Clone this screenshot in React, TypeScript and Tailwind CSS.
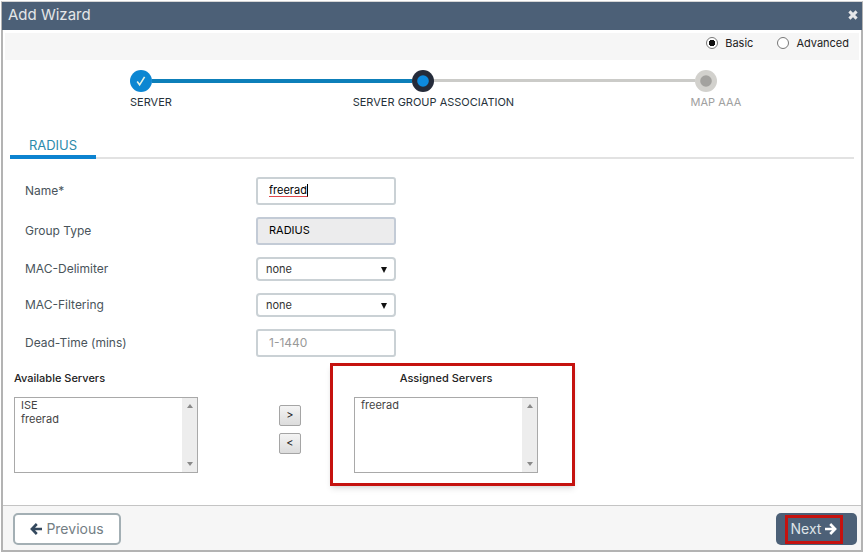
import { useState } from "react";
import type { ReactNode } from "react";

type StepState = "done" | "current" | "pending";

function StepDot({ state }: { state: StepState }) {
  if (state === "done") {
    return (
      <svg viewBox="0 0 22 22" className="size-[22px] shrink-0" aria-hidden="true">
        <circle cx="11" cy="11" r="11" fill="#0c86d2" />
        <path d="M7.2 11.6l2.4 3.2 5-8" fill="none" stroke="#e6f3e6" strokeWidth="1.6" />
      </svg>
    );
  }
  const current = state === "current";
  return (
    <svg viewBox="0 0 22 22" className="size-[22px] shrink-0" aria-hidden="true">
      <circle cx="11" cy="11" r="11" fill={current ? "#242b3a" : "#d2d1cd"} />
      <circle cx="11" cy="11" r="5.8" fill={current ? "#0d8ade" : "#a3a29f"} />
    </svg>
  );
}

function Step({ state, label }: { state: StepState; label: string }) {
  return (
    <li className="flex w-[22px] flex-col items-center gap-1">
      <StepDot state={state} />
      <span className={`ml-5 text-[11px] leading-3 whitespace-nowrap ${state === "pending" ? "text-[#a0a0a0]" : "text-[#26323a]"}`}>
        {label}
      </span>
    </li>
  );
}

function Arrow({ left = false }: { left?: boolean }) {
  return (
    <svg
      viewBox="0 0 12 12"
      className={`size-3 shrink-0 ${left ? "text-[#34495e]" : "text-white"}`}
      fill="none"
      stroke="currentColor"
      strokeWidth="2.6"
      aria-hidden="true"
    >
      <path d={left ? "M12 6H2M6.8 1L1.9 6l4.9 5" : "M0 6h10M5.2 1l4.9 5-4.9 5"} />
    </svg>
  );
}

function Row({ id, label, children }: { id: string; label: string; children: ReactNode }) {
  return (
    <div className="flex items-center">
      <label htmlFor={id} className="w-[231px] text-xs text-[#49545b]">
        {label}
      </label>
      <div className="relative w-[140px]">{children}</div>
    </div>
  );
}

function Dropdown({ id }: { id: string }) {
  return (
    <>
      <select id={id} className="block h-6 w-full appearance-none rounded border-2 border-[#cad1d5] bg-white px-2 text-[11px] text-[#333]">
        <option>none</option>
      </select>
      <svg viewBox="0 0 6 6" className="pointer-events-none absolute top-[10px] right-[9px] size-[6px]" aria-hidden="true">
        <path d="M0 0h6L3 6z" fill="#111" />
      </svg>
    </>
  );
}

function ServerList({ id, servers }: { id: string; servers: string[] }) {
  return (
    <div className="flex h-[76px] w-[184px] border border-[#a9a9a9] bg-white">
      <select id={id} multiple className="min-w-0 flex-1 appearance-none overflow-hidden bg-white text-[11px] text-[#444]">
        {servers.map((s) => (
          <option key={s} className="min-h-0 px-[6px] py-0 leading-[14px]">
            {s}
          </option>
        ))}
      </select>
      <div className="flex w-[15px] flex-col items-center justify-between bg-[#ededed] py-[6px]">
        <svg viewBox="0 0 6 4" className="h-1 w-[6px]" aria-hidden="true">
          <path d="M0 4h6L3 0z" fill="#8a8a8a" />
        </svg>
        <svg viewBox="0 0 6 4" className="h-1 w-[6px]" aria-hidden="true">
          <path d="M0 0h6L3 4z" fill="#8a8a8a" />
        </svg>
      </div>
    </div>
  );
}

const inputClass = "block h-7 w-full rounded-[3px] border-2 px-[11px] pb-[2px]";
const moveClass =
  "flex h-[21px] w-[22px] items-center justify-center rounded-[2px] border border-[#a5a5a5] bg-linear-to-b from-[#f4f4f4] to-[#dcdcdc] text-[11px] text-[#222]";

export default function App() {
  const [mode, setMode] = useState("basic");
  const [name, setName] = useState("freerad");

  return (
    <div className="flex min-h-screen flex-col bg-white p-px font-['Inter','Liberation_Sans',sans-serif]">
      <main className="flex flex-1 flex-col border-2 border-[#b3b3b3] border-t-[#d5d5d5] bg-white">
        <header className="-mx-px -mt-px flex h-7 items-center justify-between bg-[#4c6077] pr-1 pb-[2px] pl-[6px]">
          <h1 className="text-[15px] leading-5 text-[#e3e6e8]">Add Wizard</h1>
          <button type="button" aria-label="Close">
            <svg viewBox="0 0 10 10" className="size-[10px]" aria-hidden="true">
              <path d="M1.4 1.4l7.2 7.2M8.6 1.4L1.4 8.6" stroke="#e6e8ea" strokeWidth="3" />
            </svg>
          </button>
        </header>

        <fieldset className="mx-[2px] mt-[3px] flex h-[27px] items-start justify-end gap-6 bg-[#f6f6f6] pt-[2px] pr-[10px] text-[11px] text-[#222]">
          {["Basic", "Advanced"].map((m) => (
            <label key={m} className="flex items-center gap-[7px]">
              <input
                type="radio"
                name="mode"
                checked={mode === m.toLowerCase()}
                onChange={() => setMode(m.toLowerCase())}
                className="size-3 appearance-none rounded-full border border-[#777] bg-white checked:bg-[radial-gradient(circle,#111_0_3px,#fff_3px)]"
              />
              {m}
            </label>
          ))}
        </fieldset>

        <ol className="mt-[10px] mr-[16.8%] ml-[14.8%] flex">
          <Step state="done" label="SERVER" />
          <li aria-hidden="true" className="mt-[9px] h-1 flex-1 bg-[#0d7fb9]" />
          <Step state="current" label="SERVER GROUP ASSOCIATION" />
          <li aria-hidden="true" className="mt-[9px] h-[3px] flex-1 bg-[#cbcbc8]" />
          <Step state="pending" label="MAP AAA" />
        </ol>

        <nav className="mx-[7px] mt-7 flex border-b-2 border-[#e2e2e2]">
          <a href="#radius" className="-mb-[2px] flex h-[23px] w-[86px] justify-center border-b-4 border-[#0c83d0] text-[13px] leading-[18px] text-[#2d8bab]">
            RADIUS
          </a>
        </nav>

        <form className="ml-[22px] flex flex-col gap-3 pt-[18px]">
          <Row id="name" label="Name*">
            <input
              id="name"
              value={name}
              spellCheck={false}
              onChange={(e) => setName(e.target.value)}
              className={`${inputClass} border-[#cad1d5] bg-white text-[11px] text-black`}
            />
            {/* spelling mark and caret */}
            <span aria-hidden="true" className="pointer-events-none absolute top-[7px] left-[13px] h-[13px] w-[39px] border-r border-b border-r-black border-b-[#e0484c]" />
          </Row>
          <Row id="group-type" label="Group Type">
            <input id="group-type" readOnly value="RADIUS" className={`${inputClass} border-[#c3cbd6] bg-[#ececed] text-[11px] text-black`} />
          </Row>
          <Row id="delimiter" label="MAC-Delimiter">
            <Dropdown id="delimiter" />
          </Row>
          <Row id="filtering" label="MAC-Filtering">
            <Dropdown id="filtering" />
          </Row>
          <Row id="dead-time" label="Dead-Time (mins)">
            <input id="dead-time" placeholder="1-1440" className={`${inputClass} border-[#cad1d5] bg-white text-xs placeholder:text-[#999]`} />
          </Row>
        </form>

        <section className="mt-[6px] mb-4 ml-[11px] flex items-start">
          <div className="flex flex-col gap-3 pt-2">
            <label htmlFor="available" className="text-[11px] leading-[14px] font-medium text-[#222]">
              Available Servers
            </label>
            <ServerList id="available" servers={["ISE", "freerad"]} />
          </div>
          <div className="mt-[42px] ml-[81px] flex flex-col gap-[7px]">
            <button type="button" className={moveClass}>
              &gt;
            </button>
            <button type="button" className={moveClass}>
              &lt;
            </button>
          </div>
          <div className="ml-[29px] w-[245px] border-3 border-[#c5120f] pt-[5px] pb-[10px] pl-[21px] shadow-md">
            <div className="flex w-[184px] flex-col items-center gap-3">
              <label htmlFor="assigned" className="text-[11px] leading-[14px] font-medium text-[#222]">
                Assigned Servers
              </label>
              <ServerList id="assigned" servers={["freerad"]} />
            </div>
          </div>
        </section>

        <footer className="mt-auto flex h-[45px] items-center justify-between border-t border-[#c4c4c4] bg-[#f6f6f6] pt-[2px] pr-1 pl-[10px]">
          <button type="button" className="flex h-8 w-[108px] items-center justify-center gap-1 rounded-[5px] border-2 border-[#a3afb4] bg-white text-sm text-[#737e84]">
            <Arrow left />
            Previous
          </button>
          <button type="button" className="flex h-8 w-[81px] items-center rounded-[5px] bg-[#4c6077] pl-[9px] text-sm text-[#dfe4e8]">
            <span className="flex h-[29px] w-[58px] items-center justify-center gap-1 border-3 border-[#c5120f]">
              Next
              <Arrow />
            </span>
          </button>
        </footer>
      </main>
    </div>
  );
}
